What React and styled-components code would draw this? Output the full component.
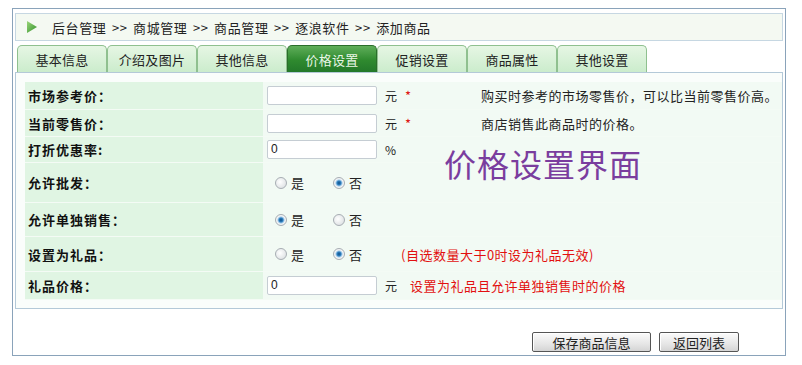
import styled, { createGlobalStyle } from "styled-components";

const GlobalStyle = createGlobalStyle`
    body {
        margin: 0;
        background: #ffffff;
        font-family: "Noto Sans CJK SC", "Liberation Sans", sans-serif;
        font-size: 13px;
        color: #222;
    }
`;

const rows = [
    { label: "市场参考价：", kind: "input", value: "", unit: "元", star: true, note: "购买时参考的市场零售价，可以比当前零售价高。", h: 28 },
    { label: "当前零售价：", kind: "input", value: "", unit: "元", star: true, note: "商店销售此商品时的价格。", h: 27 },
    { label: "打折优惠率:", kind: "input", value: "0", unit: "%", h: 26 },
    { label: "允许批发：", kind: "radio", yes: false, h: 40 },
    { label: "允许单独销售：", kind: "radio", yes: true, h: 34 },
    { label: "设置为礼品：", kind: "radio", yes: false, red: "(自选数量大于0时设为礼品无效)", h: 35 },
    { label: "礼品价格：", kind: "input", value: "0", unit: "元", red: "设置为礼品且允许单独销售时的价格", h: 28 },
];

const tabs = ["基本信息", "介绍及图片", "其他信息", "价格设置", "促销设置", "商品属性", "其他设置"];

export default function App() {
    return (
        <Page>
            <GlobalStyle />
            <Frame>
                <TitleBar>
                    <svg width="12" height="12" viewBox="0 0 12 12">
                        <defs>
                            <linearGradient id="tri" x1="0" y1="0" x2="1" y2="1">
                                <stop offset="0" stopColor="#9bd67a" />
                                <stop offset="1" stopColor="#2f8f2a" />
                            </linearGradient>
                        </defs>
                        <polygon points="1,0 11,6 1,12" fill="url(#tri)" />
                    </svg>
                    <span>后台管理 &gt;&gt; 商城管理 &gt;&gt; 商品管理 &gt;&gt; 逐浪软件 &gt;&gt; 添加商品</span>
                </TitleBar>
                <TabStrip>
                    {tabs.map(t => <Tab key={t} $active={t === "价格设置"}>{t}</Tab>)}
                </TabStrip>
                <Panel>
                    <Grid>
                        {rows.map(r => (
                            <Row key={r.label} $h={r.h}>
                                <Label>{r.label}</Label>
                                <Value>
                                    {r.kind === "input" ? (
                                        <>
                                            <TextBox>{r.value}</TextBox>
                                            <Unit>{r.unit}</Unit>
                                            {r.star && <Star>*</Star>}
                                            {r.note && <Note>{r.note}</Note>}
                                            {r.red && <RedNote $left={13}>{r.red}</RedNote>}
                                        </>
                                    ) : (
                                        <>
                                            <Choice><Radio $on={r.yes} />是</Choice>
                                            <Choice><Radio $on={!r.yes} />否</Choice>
                                            {r.red && <RedNote $left={18}>{r.red}</RedNote>}
                                        </>
                                    )}
                                </Value>
                            </Row>
                        ))}
                    </Grid>
                    <Stamp>价格设置界面</Stamp>
                </Panel>
                <Footer>
                    <Button $w={119}>保存商品信息</Button>
                    <Button $w={80}>返回列表</Button>
                </Footer>
            </Frame>
        </Page>
    );
}

const Page = styled.div`
    padding: 8px 16px 0 12px;
    width: 774px;
`;
const Frame = styled.div`
    border: 1px solid #8aa3ba;
    padding: 4px 2px 0 2px;
    height: 348px;
    box-sizing: border-box;
`;
const TitleBar = styled.div`
    height: 26px;
    border: 1px solid #c6d7e2;
    background: #f4f9f2;
    display: flex;
    align-items: center;
    gap: 14px;
    padding-left: 10px;
    font-size: 13px;
    letter-spacing: 0.6px;
    word-spacing: 2px;
    color: #222;
`;
const TabStrip = styled.div`
    display: flex;
    margin-top: 4px;
    padding-left: 2px;
    height: 27px;
    border-bottom: 1px solid #b4c9d8;
`;
const Tab = styled.div`
    width: 90px;
    box-sizing: border-box;
    height: 27px;
    border: 1px solid ${p => (p.$active ? "#2b6e2b" : "#8fc08f")};
    border-bottom: none;
    border-radius: 5px 5px 0 0;
    background: ${p => (p.$active
        ? "linear-gradient(#5fae5a, #2f8a2f 55%, #23782a)"
        : "linear-gradient(#e6f6e4, #cbeccc)")};
    color: ${p => (p.$active ? "#e8f6e6" : "#222")};
    display: flex;
    align-items: center;
    justify-content: center;
    font-size: 13px;
    letter-spacing: 0.3px;
`;
const Panel = styled.div`
    position: relative;
    border: 1px solid #b4c9d8;
    border-top: none;
    background: #fafdfb;
    padding: 9px 0 8px 9px;
`;
const Grid = styled.div`
    display: flex;
    flex-direction: column;
`;
const Row = styled.div`
    display: grid;
    grid-template-columns: 238px 1fr;
    height: ${p => p.$h}px;
    border-bottom: 1px solid #f4fbf5;
    box-sizing: border-box;
`;
const Label = styled.div`
    background: #e0f5e3;
    display: flex;
    align-items: center;
    padding-left: 3px;
    font-weight: bold;
    font-size: 13px;
    letter-spacing: 1px;
    color: #111;
`;
const Value = styled.div`
    background: #f2faf4;
    display: flex;
    align-items: center;
    padding-left: 4px;
    font-size: 13px;
`;
const TextBox = styled.div`
    width: 110px;
    height: 19px;
    box-sizing: border-box;
    border: 1px solid #c5cdd3;
    border-radius: 2px;
    background: #fff;
    font-family: "Liberation Sans", sans-serif;
    font-size: 12px;
    line-height: 17px;
    padding-left: 3px;
`;
const Unit = styled.span`
    margin-left: 8px;
    width: 12px;
    font-size: 12px;
`;
const Star = styled.span`
    color: #d11;
    margin-left: 8px;
    font-size: 13px;
`;
const Note = styled.span`
    margin-left: 70px;
    font-size: 13px;
    letter-spacing: 0.5px;
    color: #222;
`;
const RedNote = styled.span`
    margin-left: ${p => p.$left}px;
    font-size: 13px;
    letter-spacing: 0.5px;
    color: #e21010;
`;
const Choice = styled.span`
    display: inline-flex;
    align-items: center;
    gap: 4px;
    margin-left: 8px;
    width: 50px;
    font-size: 13px;
`;
const Radio = styled.span`
    width: 12px;
    height: 12px;
    border-radius: 50%;
    box-sizing: border-box;
    border: 1px solid #a7adb3;
    background: ${p => (p.$on
        ? "radial-gradient(circle, #0d4f86 0, #2f7fc0 2px, #9cc6e6 3px, #f2f4f6 4px)"
        : "radial-gradient(circle at 40% 40%, #ffffff, #d6dadd)")};
`;
const Stamp = styled.div`
    position: absolute;
    left: 428px;
    top: 67px;
    font-size: 32px;
    color: #7a3d9e;
    letter-spacing: 1px;
`;
const Footer = styled.div`
    display: flex;
    justify-content: flex-end;
    gap: 8px;
    padding: 23px 44px 0 0;
`;
const Button = styled.div`
    width: ${p => p.$w}px;
    height: 20px;
    box-sizing: border-box;
    border: 1px solid #555;
    border-radius: 2px;
    background: linear-gradient(#fbfbfb, #e6e6e6 60%, #d4d4d4);
    box-shadow: inset 1px 1px 0 #fff;
    display: flex;
    align-items: center;
    justify-content: center;
    font-size: 13px;
    color: #222;
`;
